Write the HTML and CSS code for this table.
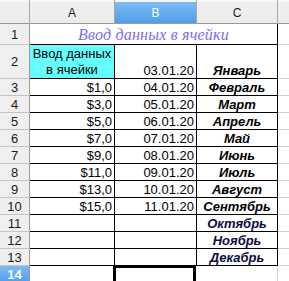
FILE: index.html
```html
<!DOCTYPE html>
<html>
<head>
<meta charset="utf-8">
<link rel="stylesheet" href="styles.css">
</head>
<body>
<div class="sheet">
  <div class="ch corner"></div>
  <div class="ch">A</div>
  <div class="ch sel">B</div>
  <div class="ch">C</div>
  <div class="ch last"></div>

  <div class="rh r1">1</div>
  <div class="c title span3">Ввод данных в ячейки</div>
  <div class="c out"></div>

  <div class="rh r2">2</div>
  <div class="c t cyan">Ввод данных<br>в ячейки</div>
  <div class="c t num">03.01.20</div>
  <div class="c t mon">Январь</div>
  <div class="c out"></div>

  <div class="rh">3</div>
  <div class="c t num">$1,0</div>
  <div class="c t num">04.01.20</div>
  <div class="c t mon">Февраль</div>
  <div class="c out"></div>

  <div class="rh">4</div>
  <div class="c t num">$3,0</div>
  <div class="c t num">05.01.20</div>
  <div class="c t mon">Март</div>
  <div class="c out"></div>

  <div class="rh">5</div>
  <div class="c t num">$5,0</div>
  <div class="c t num">06.01.20</div>
  <div class="c t mon">Апрель</div>
  <div class="c out"></div>

  <div class="rh">6</div>
  <div class="c t num">$7,0</div>
  <div class="c t num">07.01.20</div>
  <div class="c t mon">Май</div>
  <div class="c out"></div>

  <div class="rh">7</div>
  <div class="c t num">$9,0</div>
  <div class="c t num">08.01.20</div>
  <div class="c t mon">Июнь</div>
  <div class="c out"></div>

  <div class="rh">8</div>
  <div class="c t num">$11,0</div>
  <div class="c t num">09.01.20</div>
  <div class="c t mon">Июль</div>
  <div class="c out"></div>

  <div class="rh">9</div>
  <div class="c t num">$13,0</div>
  <div class="c t num">10.01.20</div>
  <div class="c t mon">Август</div>
  <div class="c out"></div>

  <div class="rh">10</div>
  <div class="c t num">$15,0</div>
  <div class="c t num">11.01.20</div>
  <div class="c t mon">Сентябрь</div>
  <div class="c out"></div>

  <div class="rh">11</div>
  <div class="c t"></div>
  <div class="c t"></div>
  <div class="c t mon navy">Октябрь</div>
  <div class="c out"></div>

  <div class="rh">12</div>
  <div class="c t"></div>
  <div class="c t"></div>
  <div class="c t mon navy">Ноябрь</div>
  <div class="c out"></div>

  <div class="rh">13</div>
  <div class="c t"></div>
  <div class="c t"></div>
  <div class="c t mon navy">Декабрь</div>
  <div class="c out"></div>

  <div class="rh sel">14</div>
  <div class="c blank"></div>
  <div class="c blank cursor"></div>
  <div class="c blank edge"></div>
  <div class="c blank out"></div>
</div>
</body>
</html>
```

FILE: styles.css
```css
html, body {
  margin: 0;
  padding: 0;
  background: #ffffff;
}
body {
  width: 289px;
  height: 281px;
  overflow: hidden;
  font-family: "Liberation Sans", Arial, sans-serif;
  font-size: 13px;
  color: #000;
}
.sheet {
  display: grid;
  grid-template-columns: 30px 85px 82px 81px 11px;
  grid-template-rows: 24px 21px 34px repeat(11, 17px) 16px;
}
.sheet > div {
  box-sizing: border-box;
  min-width: 0;
  overflow: hidden;
  white-space: nowrap;
}
.ch {
  background: linear-gradient(#f7f7f7 0, #f7f7f7 2px, #efefef 2px, #ececec 100%);
  border-right: 1px solid #a9a9a9;
  border-bottom: 1px solid #9a9a9a;
  display: flex;
  align-items: center;
  justify-content: center;
  padding-top: 2px;
  font-size: 12px;
  color: #1a1a1a;
}
.ch.sel {
  background: linear-gradient(#f7f7f7 0, #f7f7f7 2px, #7fbaf4 2px, #4f9eeb 100%);
  color: #ffffff;
}
.ch.last {
  border-right: none;
}
.rh {
  background: #efefef;
  border-right: 1px solid #9a9a9a;
  border-bottom: 1px solid #c4c4c4;
  display: flex;
  align-items: center;
  justify-content: center;
  font-size: 13px;
  color: #1a1a1a;
}
.rh.sel {
  background: linear-gradient(#80bbf4, #4f9eeb);
  color: #ffffff;
  font-weight: bold;
  border-bottom: none;
  align-items: flex-start;
  padding-top: 1px;
}
.c {
  border-right: 1px solid #d0d0d0;
  border-bottom: 1px solid #d0d0d0;
  display: flex;
  align-items: flex-end;
  line-height: 15px;
}
.c.t, .c.title {
  border-right-color: #000;
  border-bottom-color: #000;
}
.c.out {
  border-right: none;
}
.span3 {
  grid-column: span 3;
}
.title {
  justify-content: center;
  align-items: center;
  font-family: "Liberation Serif", "Times New Roman", serif;
  font-style: italic;
  font-size: 16px;
  letter-spacing: 0.2px;
  color: #7b6cf0;
  padding-top: 1px;
}
.cyan {
  background: #66ffff;
  white-space: normal !important;
  text-align: center;
  justify-content: center;
  align-items: center;
  line-height: 16px;
}
.num {
  justify-content: flex-end;
  padding-right: 2px;
  padding-bottom: 0;
}
.mon {
  justify-content: center;
  font-weight: bold;
  font-style: italic;
}
.navy {
  color: #0c0c40;
}
.blank {
  border-bottom: none;
  border-right: none;
}
.blank.edge {
  border-right: 1px solid #d0d0d0;
}
.sheet > .cursor {
  position: relative;
  overflow: visible;
}
.cursor::before {
  content: "";
  position: absolute;
  left: -2px;
  top: -1px;
  width: 83px;
  height: 30px;
  border: 3px solid #000;
  box-sizing: border-box;
}
```
